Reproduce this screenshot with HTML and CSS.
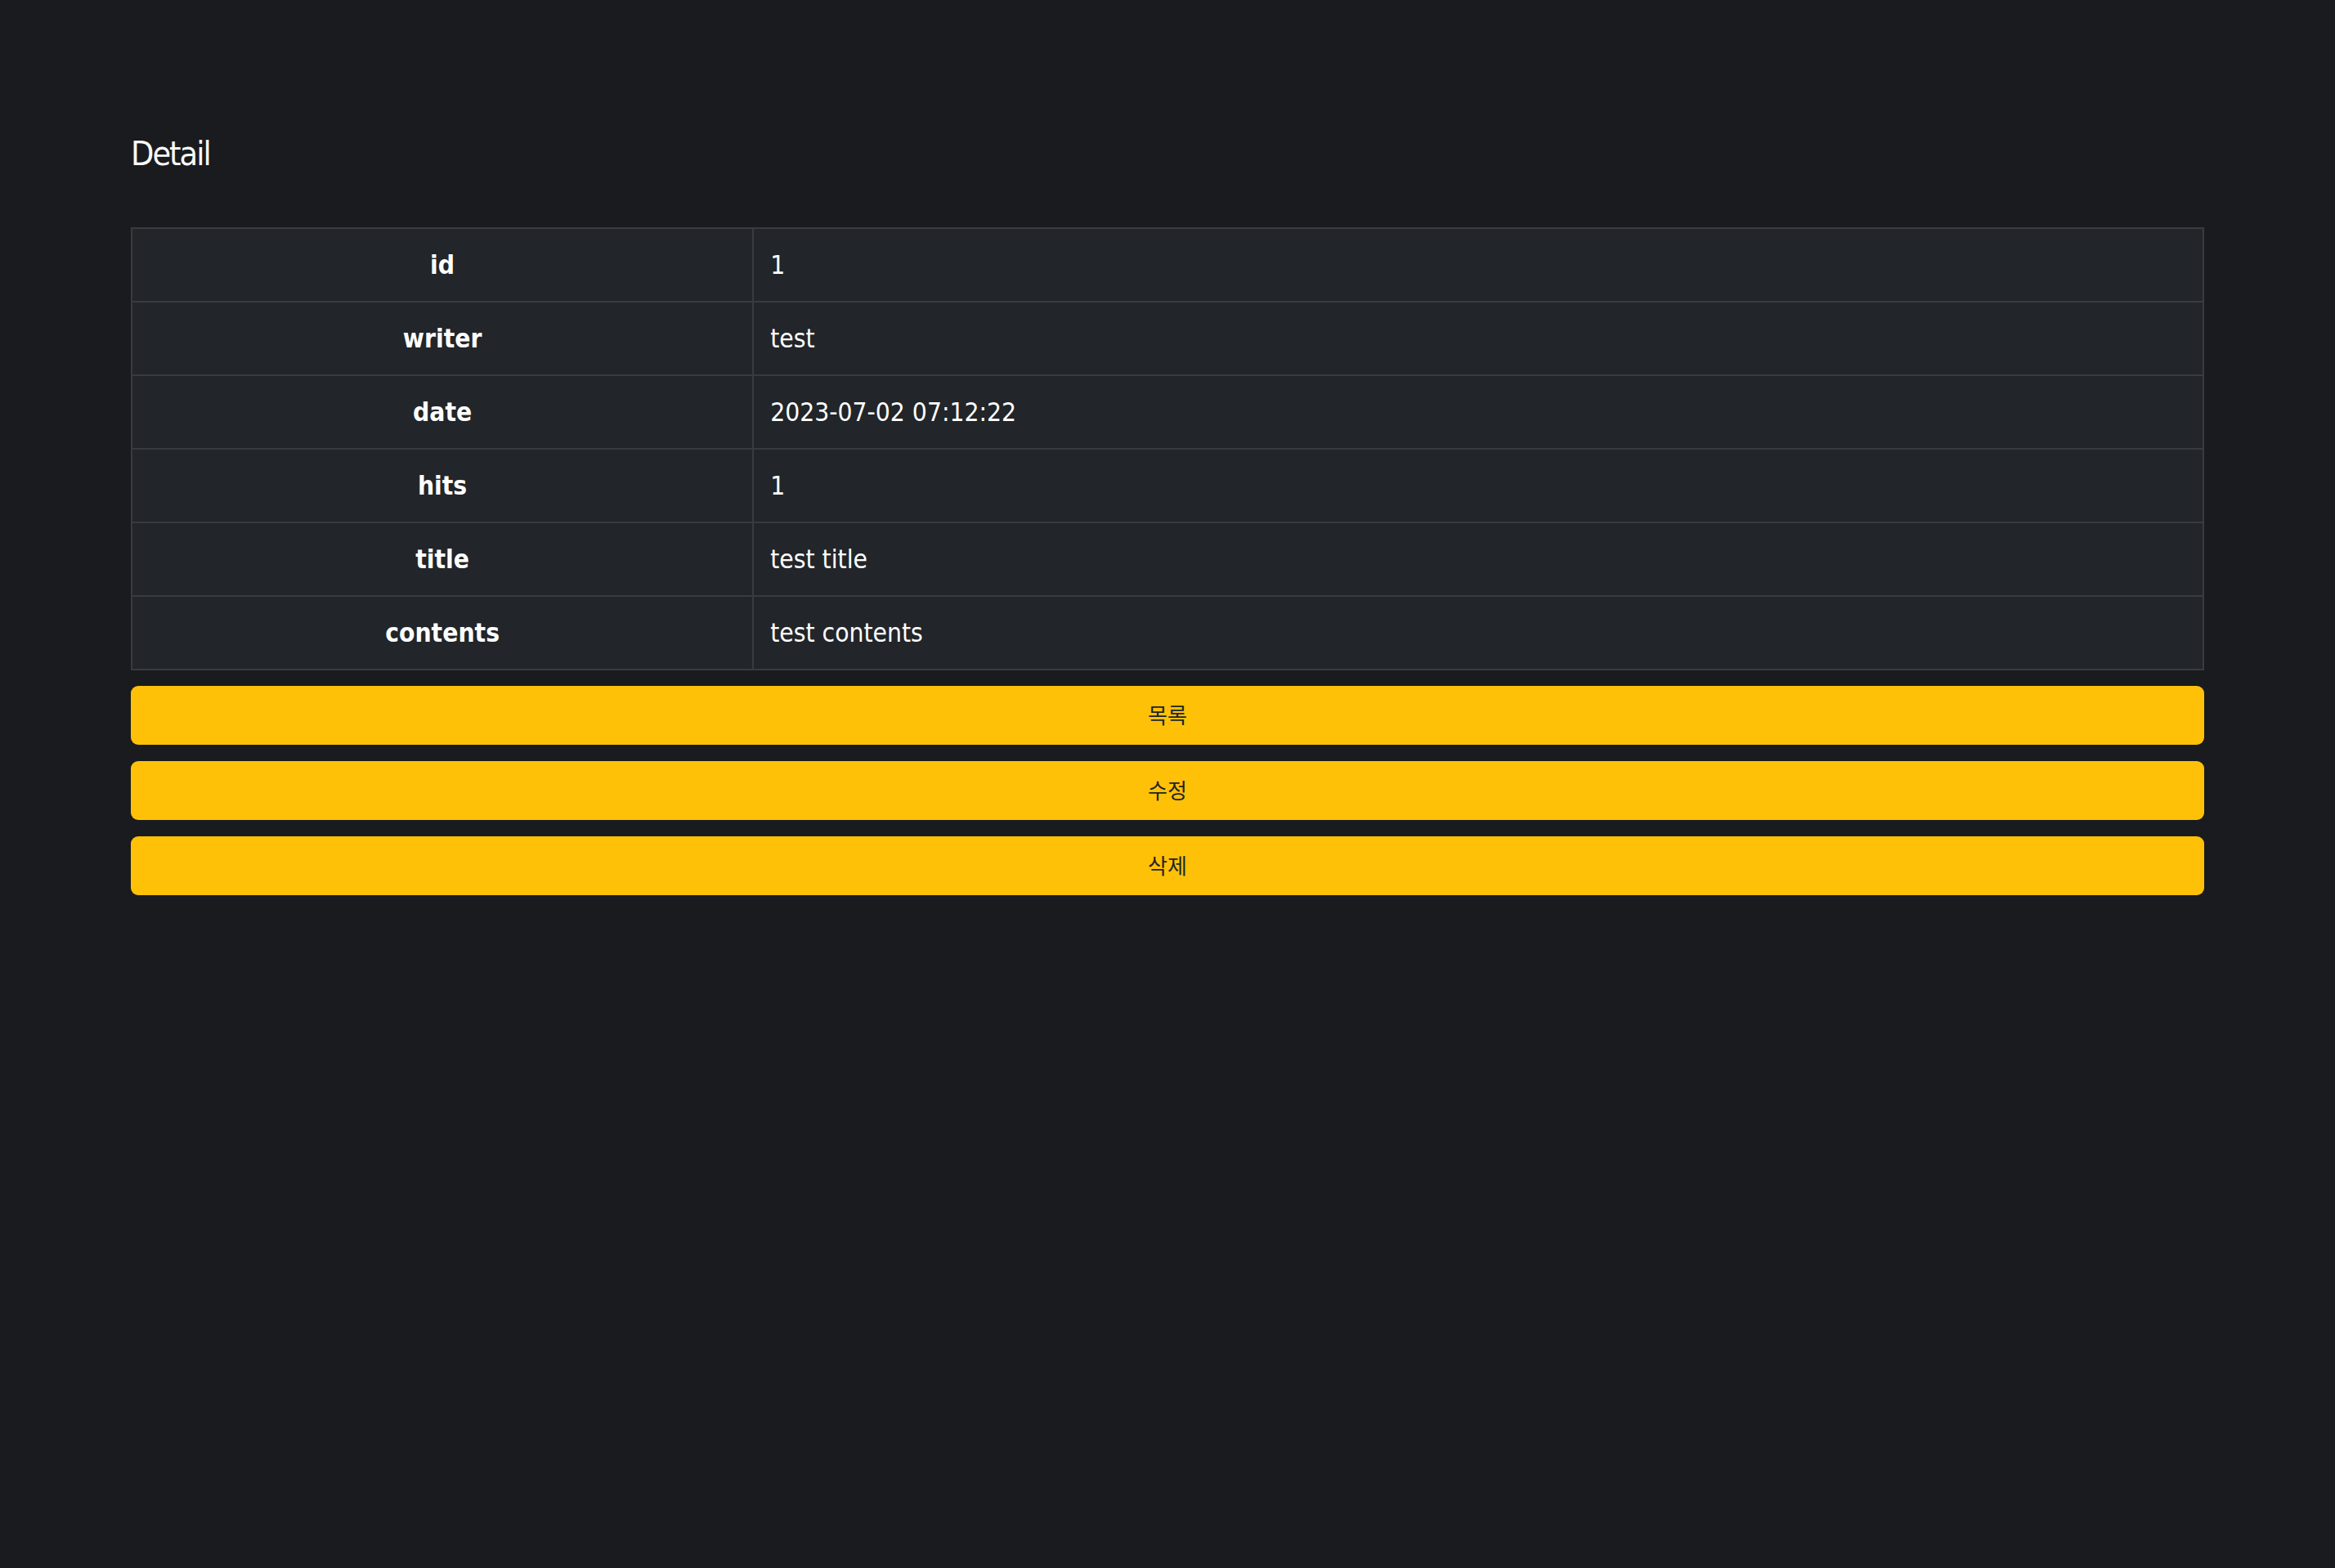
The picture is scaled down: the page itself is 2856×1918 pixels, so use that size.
FILE: index.html
```html
<!DOCTYPE html>
<html lang="ko">
<head>
<meta charset="utf-8">
<title>Detail</title>
<link rel="stylesheet" href="styles.css">
</head>
<body>
<main class="page">
  <h1 class="title">Detail</h1>
  <table class="detail">
    <tr><th>id</th><td>1</td></tr>
    <tr><th>writer</th><td>test</td></tr>
    <tr><th>date</th><td>2023-07-02 07:12:22</td></tr>
    <tr><th>hits</th><td>1</td></tr>
    <tr><th>title</th><td>test title</td></tr>
    <tr><th>contents</th><td>test contents</td></tr>
  </table>
  <div class="actions">
    <button class="btn">목록</button>
    <button class="btn">수정</button>
    <button class="btn">삭제</button>
  </div>
</main>
</body>
</html>
```
FILE: styles.css
```css
html, body {
  margin: 0;
  padding: 0;
  background: #191b1f;
  min-height: 100%;
}
body {
  font-family: "DejaVu Sans Condensed", "DejaVu Sans", sans-serif;
  font-stretch: condensed;
  color: #f8f9fa;
}
.page {
  padding: 164px 160px 0 160px;
}
.title {
  margin: 0 0 65px 0;
  font-size: 41px;
  line-height: 49px;
  letter-spacing: -2px;
  font-weight: normal;
  color: #f8f9fa;
}
.detail {
  width: 100%;
  border-collapse: collapse;
  background: #222529;
  font-size: 31.5px;
}
.detail th, .detail td {
  border: 2px solid #383b3f;
  line-height: 47px;
  padding: 21px 20px 20px 20px;
  vertical-align: middle;
}
.detail th {
  width: 30%;
  text-align: center;
  font-weight: bold;
  color: #ffffff;
}
.detail td {
  text-align: left;
  font-weight: normal;
  color: #ffffff;
}
.actions {
  display: flex;
  flex-direction: column;
  gap: 20px;
  margin-top: 19px;
}
.btn {
  display: block;
  width: 100%;
  height: 72px;
  border: 0;
  border-radius: 9px;
  background: #ffc107;
  color: #212529;
  font-family: "Noto Sans CJK KR", "Noto Sans", sans-serif;
  font-stretch: normal;
  font-size: 26px;
  font-weight: 400;
  padding: 0 0 3px 0;
  margin: 0;
  cursor: pointer;
}
```
